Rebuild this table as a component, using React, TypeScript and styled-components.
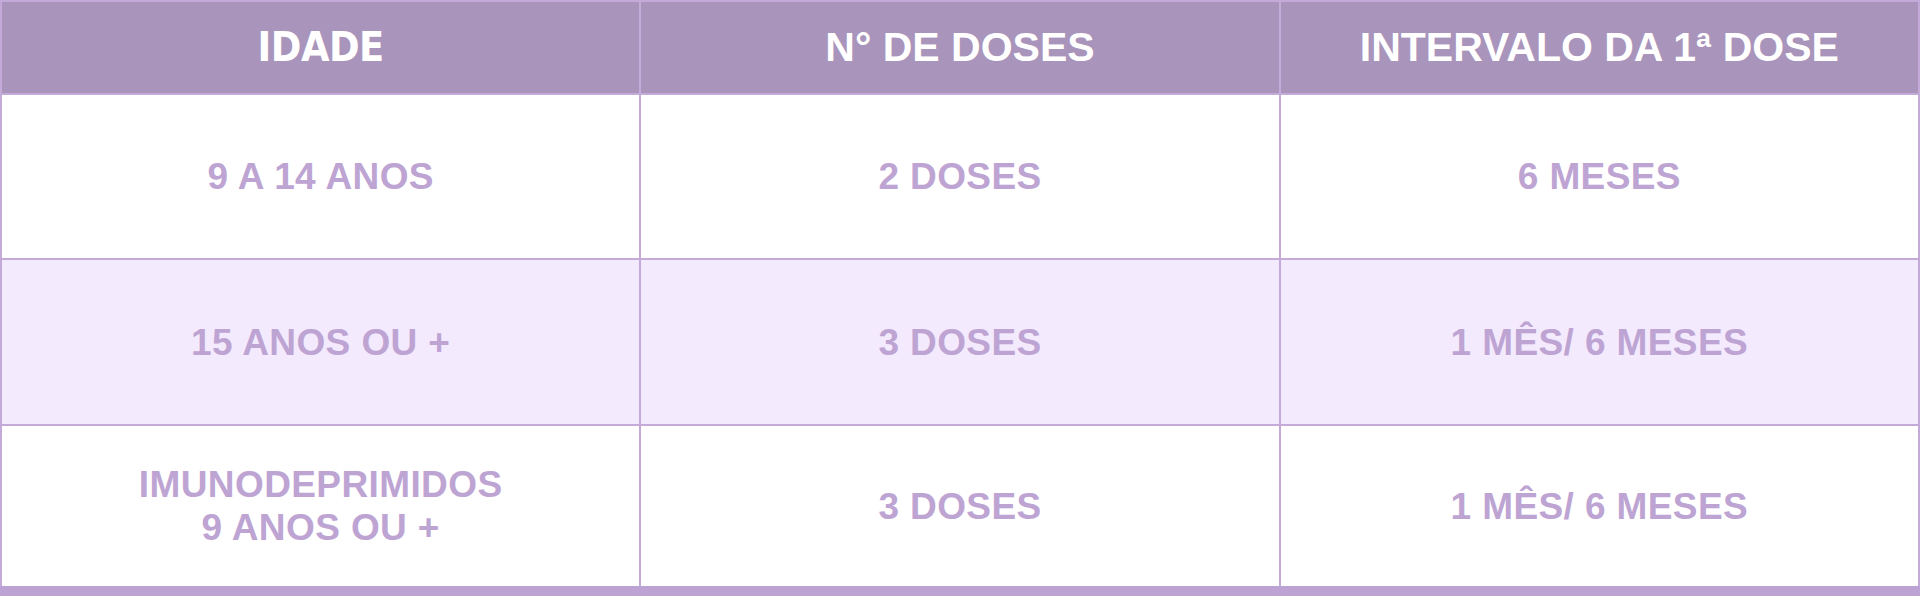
import React from "react"
import styled, { createGlobalStyle } from "styled-components"

const GlobalStyle = createGlobalStyle`
  html, body {
    margin: 0;
    padding: 0;
    background: #ffffff;
  }
`

const Table = styled.div`
  width: 1920px;
  box-sizing: border-box;
  display: grid;
  grid-template-columns: 1fr 1fr 1fr;
  grid-template-rows: 91px 163px 164px 160px;
  gap: 2px;
  padding: 2px 2px 0 2px;
  background: #c3aad8;
  border-bottom: 10px solid #bda3d3;
  font-family: "Liberation Sans", Arial, sans-serif;
  font-weight: 700;
`

const HeadCell = styled.div<{ $narrow?: boolean }>`
  display: flex;
  align-items: center;
  justify-content: center;
  background: #a994bb;
  color: #ffffff;
  font-size: 41px;
  font-family: ${(p) =>
    p.$narrow
      ? `"Liberation Sans Narrow", "DejaVu Sans Condensed", "Liberation Sans", sans-serif`
      : `"Liberation Sans", Arial, sans-serif`};
  letter-spacing: ${(p) => (p.$narrow ? "-0.5px" : "0")};
  padding-bottom: 1px;
`

const Cell = styled.div<{ $shade?: boolean }>`
  display: flex;
  align-items: center;
  justify-content: center;
  text-align: center;
  background: ${(p) => (p.$shade ? "#f4eafe" : "#ffffff")};
  color: #bda4d3;
  font-size: 37px;
  letter-spacing: 0.4px;
  line-height: 43px;
`

const rows = [
  { idade: ["9 A 14 ANOS"], doses: "2 DOSES", intervalo: "6 MESES" },
  { idade: ["15 ANOS OU +"], doses: "3 DOSES", intervalo: "1 MÊS/ 6 MESES" },
  { idade: ["IMUNODEPRIMIDOS", "9 ANOS OU +"], doses: "3 DOSES", intervalo: "1 MÊS/ 6 MESES" },
]

const App: React.FC = () => {
  return (
    <>
      <GlobalStyle />
      <Table>
        <HeadCell $narrow>IDADE</HeadCell>
        <HeadCell>N° DE DOSES</HeadCell>
        <HeadCell>INTERVALO DA 1ª DOSE</HeadCell>
        {rows.map((r, i) => (
          <React.Fragment key={i}>
            <Cell $shade={i === 1}>
              <div>
                {r.idade.map((line, j) => (
                  <div key={j}>{line}</div>
                ))}
              </div>
            </Cell>
            <Cell $shade={i === 1}>{r.doses}</Cell>
            <Cell $shade={i === 1}>{r.intervalo}</Cell>
          </React.Fragment>
        ))}
      </Table>
    </>
  )
}

export default App
